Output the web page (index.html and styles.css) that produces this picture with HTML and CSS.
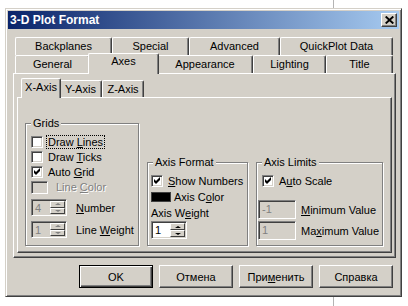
FILE: index.html
```html
<!DOCTYPE html>
<html><head>
    <title>3-D Plot Format</title>
    <link rel="stylesheet" href="styles.css">
</head>
<body>
    <div class="backline backline-top"></div>
    <div class="backline backline-bottom"></div>

    <div class="dialog">
        <div class="titlebar">
            <span class="title">3-D Plot Format</span>
            <div class="close">
                <svg width="9" height="8" viewBox="0 0 9 8"><path d="M0.7 0.5 L8.3 7.5 M8.3 0.5 L0.7 7.5" stroke="#000" stroke-width="1.9"/></svg>
            </div>
        </div>

        <div class="tabs">
            <div class="tabrow">
                <div class="tab t-backplanes">Backplanes</div>
                <div class="tab t-special">Special</div>
                <div class="tab t-advanced">Advanced</div>
                <div class="tab t-quickplot">QuickPlot Data</div>
            </div>
            <div class="tabrow">
                <div class="tab t-general">General</div>
                <div class="tab t-axes active">Axes</div>
                <div class="tab t-appearance">Appearance</div>
                <div class="tab t-lighting">Lighting</div>
                <div class="tab t-title">Title</div>
            </div>
        </div>

        <div class="panel">
            <div class="subtabs">
                <div class="subtab t-x active">X-Axis</div>
                <div class="subtab t-y">Y-Axis</div>
                <div class="subtab t-z">Z-Axis</div>
            </div>
            <div class="subpanel">
                <!-- Grids -->
                <div class="group grids">
                    <span class="caption">Grids</span>
                    <div class="group-body">
                        <div class="row cb-row">
                            <span class="cb"></span>
                            <span class="lbl focus">Draw <u>L</u>ines</span>
                        </div>
                        <div class="row cb-row">
                            <span class="cb"></span>
                            <span class="lbl">Draw <u>T</u>icks</span>
                        </div>
                        <div class="row cb-row">
                            <span class="cb"><svg width="7" height="7" viewBox="0 0 7 7"><path d="M0 2 L2 4 L6 0 L6 3 L2 7 L0 5 Z" fill="#000"/></svg></span>
                            <span class="lbl">Auto <u>G</u>rid</span>
                        </div>
                        <div class="row color-row">
                            <span class="swatch disabled-swatch"></span>
                            <span class="lbl disabled">Line <u>C</u>olor</span>
                        </div>
                        <div class="row spin-row first-spin">
                            <div class="spin disabled-spin">
                                <span class="spin-val">4</span>
                                <span class="spin-btns"><span class="spin-btn"><i class="up"></i></span><span class="spin-btn"><i class="down"></i></span></span>
                            </div>
                            <span class="lbl spin-lbl"><u>N</u>umber</span>
                        </div>
                        <div class="row spin-row">
                            <div class="spin disabled-spin">
                                <span class="spin-val">1</span>
                                <span class="spin-btns"><span class="spin-btn"><i class="up"></i></span><span class="spin-btn"><i class="down"></i></span></span>
                            </div>
                            <span class="lbl spin-lbl">Line <u>W</u>eight</span>
                        </div>
                    </div>
                </div>

                <!-- Axis Format -->
                <div class="group axis-format">
                    <span class="caption">Axis Format</span>
                    <div class="group-body">
                        <div class="row cb-row">
                            <span class="cb"><svg width="7" height="7" viewBox="0 0 7 7"><path d="M0 2 L2 4 L6 0 L6 3 L2 7 L0 5 Z" fill="#000"/></svg></span>
                            <span class="lbl"><u>S</u>how Numbers</span>
                        </div>
                        <div class="row axis-color-row">
                            <span class="swatch black-swatch"></span>
                            <span class="lbl">Axis C<u>o</u>lor</span>
                        </div>
                        <div class="plain-lbl">Axis W<u>e</u>ight</div>
                        <div class="spin weight-spin">
                            <span class="spin-val">1</span>
                            <span class="spin-btns"><span class="spin-btn"><i class="up"></i></span><span class="spin-btn"><i class="down"></i></span></span>
                        </div>
                    </div>
                </div>

                <!-- Axis Limits -->
                <div class="group axis-limits">
                    <span class="caption">Axis Limits</span>
                    <div class="group-body">
                        <div class="row cb-row">
                            <span class="cb"><svg width="7" height="7" viewBox="0 0 7 7"><path d="M0 2 L2 4 L6 0 L6 3 L2 7 L0 5 Z" fill="#000"/></svg></span>
                            <span class="lbl">A<u>u</u>to Scale</span>
                        </div>
                        <div class="row edit-row first-edit">
                            <span class="edit">-1</span>
                            <span class="lbl"><u>M</u>inimum Value</span>
                        </div>
                        <div class="row edit-row">
                            <span class="edit">1</span>
                            <span class="lbl">Ma<u>x</u>imum Value</span>
                        </div>
                    </div>
                </div>
            </div>
        </div>

        <div class="buttons">
            <div class="btn default"><span>OK</span></div>
            <div class="btn">Отмена</div>
            <div class="btn">При<u>м</u>енить</div>
            <div class="btn">Справка</div>
        </div>
    </div>
</body></html>
```

FILE: styles.css
```css
/* Page */
body {
    margin: 0;
    width: 408px;
    height: 306px;
    overflow: hidden;
    position: relative;
    background: #fff;
    font-family: "Liberation Sans", Arial, sans-serif;
    font-size: 11px;
    color: #000;
}

/* Edge of the window behind the dialog */
.backline {
    position: absolute;
    left: 333px;
    width: 1px;
    background: #b4b4b4;
}
.backline-top { top: 0; height: 8px; }
.backline-bottom { top: 297px; height: 9px; }

/* Dialog frame */
.dialog {
    margin: 8px 0 0 5px;
    width: 397px;
    height: 289px;
    box-sizing: border-box;
    padding: 2px;
    background: #d4d0c8;
    border: 1px solid;
    border-color: #d4d0c8 #404040 #404040 #d4d0c8;
    box-shadow: inset 1px 1px #fff, inset -1px -1px #808080;
    display: flex;
    flex-direction: column;
}

/* Title bar */
.titlebar {
    height: 18px;
    display: flex;
    align-items: center;
    justify-content: space-between;
    padding: 0 2px 0 2px;
    background: linear-gradient(to right, #0a246a, #a6caf0);
}
.title {
    color: #fff;
    font-weight: bold;
    font-size: 12px;
}
.close {
    width: 16px;
    height: 14px;
    box-sizing: border-box;
    background: #d4d0c8;
    border: 1px solid;
    border-color: #fff #404040 #404040 #fff;
    box-shadow: inset -1px -1px #808080;
    display: flex;
    align-items: center;
    justify-content: center;
}

/* Main tabs */
.tabs {
    margin: 8px 0 0 7px;
}
.tabrow {
    display: flex;
    height: 18px;
}
.tab {
    box-sizing: border-box;
    height: 18px;
    padding-top: 1px;
    line-height: 15px;
    text-align: center;
    background: #d4d0c8;
    border-top: 1px solid #fff;
    border-left: 1px solid #fff;
    border-right: 1px solid #404040;
    box-shadow: inset -1px 0 #808080;
    border-radius: 2px 2px 0 0;
}
.tab.active {
    height: 21px;
    margin: -2px -2px -1px;
    padding-top: 0;
    position: relative;
    z-index: 1;
}
.t-backplanes { width: 97px; }
.t-special { width: 77px; }
.t-advanced { width: 91px; }
.t-quickplot { width: 113px; }
.t-general { width: 75px; }
.t-axes { width: 71px; }
.t-appearance { width: 96px; }
.t-lighting { width: 73px; }
.t-title { width: 67px; }

/* Tab page */
.panel {
    margin-left: 5px;
    width: 383px;
    height: 185px;
    box-sizing: border-box;
    padding: 6px 3px 4px 3px;
    border: 1px solid;
    border-color: #fff #404040 #404040 #fff;
    box-shadow: inset -1px -1px #808080;
    display: flex;
    flex-direction: column;
}

.subtabs {
    display: flex;
    height: 17px;
    margin-left: 6px;
}
.subtab {
    box-sizing: border-box;
    height: 17px;
    line-height: 16px;
    text-align: center;
    background: #d4d0c8;
    border-top: 1px solid #fff;
    border-left: 1px solid #fff;
    border-right: 1px solid #404040;
    box-shadow: inset -1px 0 #808080;
    border-radius: 2px 2px 0 0;
}
.subtab.active {
    height: 20px;
    margin: -2px -2px -1px;
    line-height: 17px;
    position: relative;
    z-index: 1;
}
.t-x { width: 40px; }
.t-y { width: 43px; }
.t-z { width: 42px; }

.subpanel {
    height: 156px;
    box-sizing: border-box;
    padding: 0 0 6px 7px;
    border: 1px solid;
    border-color: #fff #404040 #404040 #fff;
    box-shadow: inset -1px -1px #808080;
    display: flex;
    align-items: flex-end;
    gap: 8px;
}

/* Group boxes */
.group {
    box-sizing: border-box;
    border: 1px solid #808080;
    box-shadow: inset 1px 1px #fff, 1px 1px #fff;
    display: flex;
    flex-direction: column;
}
.grids { width: 114px; height: 123px; }
.axis-format { width: 101px; height: 84px; }
.axis-limits { width: 127px; height: 84px; }

.caption {
    align-self: flex-start;
    margin: -7px 0 0 5px;
    padding: 0 2px;
    line-height: 13px;
    background: #d4d0c8;
}

.group-body {
    display: flex;
    flex-direction: column;
}
.grids .group-body { padding: 4px 0 0 5px; }
.axis-format .group-body { padding: 4px 0 0 3px; }
.axis-limits .group-body { padding: 4px 0 0 1px; }

.row {
    display: flex;
    align-items: center;
}
.cb-row { height: 15px; }
.axis-limits .cb-row { padding-left: 4px; }

.lbl { margin-left: 5px; white-space: nowrap; }
.focus {
    outline: 1px dotted #000;
    outline-offset: 0;
    padding: 0 1px;
    margin-left: 4px;
    line-height: 12px;
}
.disabled {
    color: #808080;
    text-shadow: 1px 1px #fff;
}

/* Checkbox */
.cb {
    width: 12px;
    height: 12px;
    box-sizing: border-box;
    flex: none;
    background: #fff;
    border: 1px solid;
    border-color: #808080 #fff #fff #808080;
    box-shadow: inset 1px 1px #404040, inset -1px -1px #d4d0c8;
    display: flex;
    align-items: center;
    justify-content: center;
}

/* Colour swatches */
.swatch {
    flex: none;
    box-sizing: border-box;
}
.color-row { height: 16px; }
.disabled-swatch {
    width: 17px;
    height: 13px;
    border: 1px solid;
    border-color: #808080 #fff #fff #808080;
    box-shadow: inset 1px 1px #404040;
    background: #d4d0c8;
}
.color-row .lbl { margin-left: 8px; }
.axis-color-row {
    height: 14px;
    margin-top: 2px;
}
.black-swatch {
    width: 20px;
    height: 10px;
    background: #000;
    border: 1px solid #404040;
}
.axis-color-row .lbl { margin-left: 3px; }

.plain-lbl {
    line-height: 13px;
    margin-top: 3px;
}

/* Spin controls */
.spin {
    flex: none;
    width: 36px;
    height: 17px;
    box-sizing: border-box;
    background: #fff;
    border: 1px solid;
    border-color: #808080 #fff #fff #808080;
    box-shadow: inset 1px 1px #404040, inset -1px -1px #d4d0c8;
    display: flex;
    padding: 1px;
}
.spin-val {
    flex: 1;
    padding-left: 2px;
    line-height: 14px;
}
.spin-btns {
    width: 15px;
    display: flex;
    flex-direction: column;
}
.spin-btn {
    flex: 1;
    box-sizing: border-box;
    background: #d4d0c8;
    border: 1px solid;
    border-color: #fff #404040 #404040 #fff;
    display: flex;
    align-items: center;
    justify-content: center;
}
.spin-btn i {
    width: 0;
    height: 0;
    border-left: 3px solid transparent;
    border-right: 3px solid transparent;
}
.spin-btn .up { border-bottom: 2px solid #000; }
.spin-btn .down { border-top: 2px solid #000; }

.disabled-spin { background: #d4d0c8; }
.disabled-spin .spin-val { color: #808080; }
.disabled-spin .spin-btn .up { border-bottom-color: #808080; }
.disabled-spin .spin-btn .down { border-top-color: #808080; }

.spin-row { height: 17px; }
.first-spin { margin-top: 4px; }
.spin-row + .spin-row { margin-top: 5px; }
.spin-lbl { margin-left: 9px; }

.weight-spin {
    margin-top: 1px;
    height: 18px;
}

/* Edit boxes */
.edit {
    flex: none;
    width: 38px;
    height: 19px;
    box-sizing: border-box;
    padding-left: 3px;
    line-height: 16px;
    color: #808080;
    background: #d4d0c8;
    border: 1px solid;
    border-color: #808080 #fff #fff #808080;
    box-shadow: inset 1px 1px #404040, inset -1px -1px #d4d0c8;
}
.edit-row { height: 19px; }
.first-edit { margin-top: 12px; }
.edit-row + .edit-row { margin-top: 2px; }

/* Buttons */
.buttons {
    margin-top: 7px;
    padding-right: 6px;
    display: flex;
    justify-content: flex-end;
    gap: 6px;
}
.btn {
    width: 74px;
    height: 23px;
    box-sizing: border-box;
    background: #d4d0c8;
    border: 1px solid;
    border-color: #fff #404040 #404040 #fff;
    box-shadow: inset -1px -1px #808080;
    display: flex;
    align-items: center;
    justify-content: center;
}
.btn.default {
    border: 1px solid #000;
    box-shadow: inset 1px 1px #fff, inset -1px -1px #404040, inset -2px -2px #808080;
}
```
